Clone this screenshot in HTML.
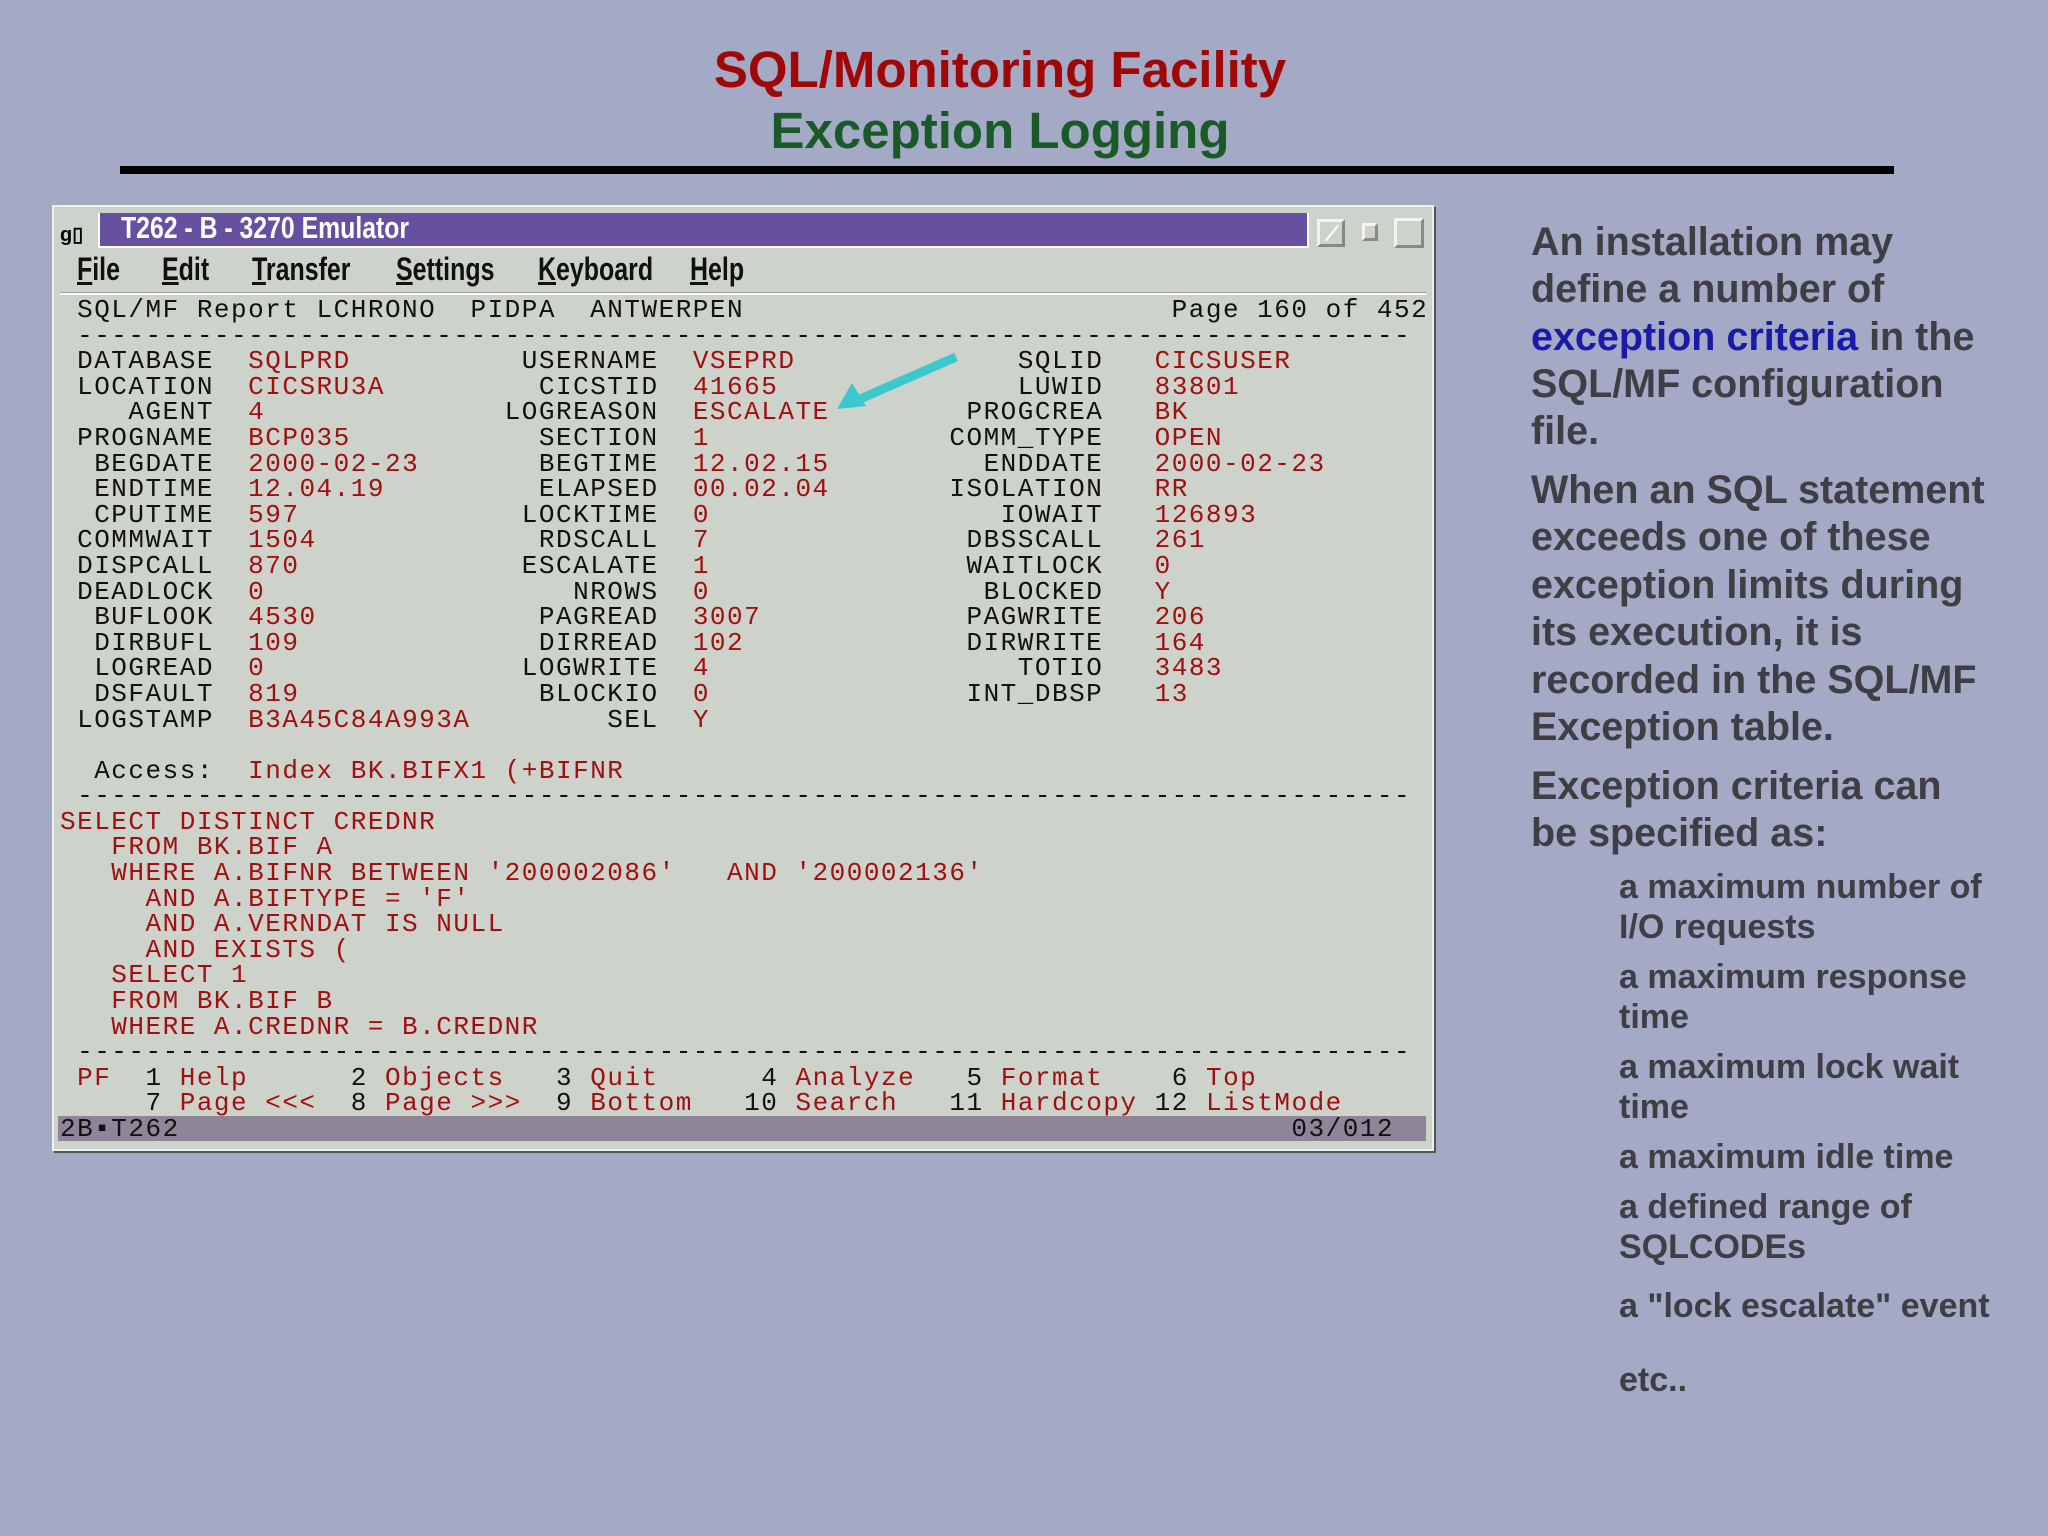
<!DOCTYPE html>
<html><head><meta charset="utf-8"><style>
*{margin:0;padding:0;box-sizing:border-box}
body{width:2048px;height:1536px;background:#a4a9c6;position:relative;overflow:hidden;font-family:"Liberation Sans",sans-serif}
.t1{position:absolute;left:0;width:2000px;text-align:center;font-weight:bold;font-size:51px}
.rule{position:absolute;left:120px;top:166px;width:1774px;height:8px;background:#000}
.win{position:absolute;left:52px;top:205px;width:1382px;height:946px;background:#cdd2cb;border:2px solid #eef0ee;box-shadow:2px 2px 0 #555}
.tb{position:absolute;left:98px;top:213px;width:1211px;height:35px;background:#6650a0;border:2px solid #fff;border-top:none}
.tbt{position:absolute;left:121px;top:210px;color:#fff;font-size:31px;font-weight:bold;transform:scaleX(.8);transform-origin:left;white-space:nowrap}
.btn{position:absolute;border:3px solid #f4f4f4;border-right-color:#888;border-bottom-color:#888}
.menu{position:absolute;top:251px;font-size:32px;font-weight:bold;transform:scaleX(.78);transform-origin:left;color:#111}
.menu u{text-decoration:underline}
.sep{position:absolute;left:60px;top:292px;width:1366px;height:3px;background:#fff;border-top:1px solid #999}
pre{position:absolute;left:60px;top:298px;font-family:"Liberation Mono",monospace;font-size:26px;letter-spacing:1.5px;line-height:25.6px;color:#111}
.r{color:#a01010}
.status{position:absolute;left:58px;top:1116px;width:1368px;height:25px;background:#8e8598}
.rt{position:absolute;left:1531px;font-weight:bold;font-size:39.5px;color:#3e3e44;white-space:nowrap;line-height:46px}
.st{position:absolute;left:1619px;font-weight:bold;font-size:34px;color:#3e3e44;white-space:nowrap;line-height:40px}
.b{color:#1a1aa8}
</style></head><body>
<div class="t1" style="top:40px;left:0;width:2000px;color:#a00808">SQL/Monitoring Facility</div>
<div class="t1" style="top:101px;color:#1a5a28">Exception Logging</div>
<div class="rule"></div>

<div class="win"></div>
<div style="position:absolute;left:60px;top:222px;font-size:20px;font-weight:bold">ɡ▯</div>
<div class="tb"></div>
<div class="tbt">T262 - B - 3270 Emulator</div>
<div class="btn" style="left:1317px;top:219px;width:28px;height:28px"></div>
<div style="position:absolute;left:1322px;top:232px;width:20px;height:2px;background:#fff;transform:rotate(-50deg)"></div>
<div class="btn" style="left:1362px;top:223px;width:16px;height:18px"></div>
<div class="btn" style="left:1394px;top:218px;width:30px;height:30px"></div>
<div class="menu" style="left:77px"><u>F</u>ile</div>
<div class="menu" style="left:162px"><u>E</u>dit</div>
<div class="menu" style="left:252px"><u>T</u>ransfer</div>
<div class="menu" style="left:396px"><u>S</u>ettings</div>
<div class="menu" style="left:538px"><u>K</u>eyboard</div>
<div class="menu" style="left:690px"><u>H</u>elp</div>
<div class="sep"></div>
<div class="status"></div>
<svg style="position:absolute;left:0;top:0" width="2048" height="1536"><line x1="956" y1="357" x2="860" y2="399" stroke="#3cc8cc" stroke-width="9"/><polygon points="837,409 852,383 866,406" fill="#3cc8cc"/></svg>
<pre> SQL/MF Report LCHRONO  PIDPA  ANTWERPEN                         Page 160 of 452
 ------------------------------------------------------------------------------
 DATABASE  <span class="r">SQLPRD</span>          USERNAME  <span class="r">VSEPRD</span>             SQLID   <span class="r">CICSUSER</span>
 LOCATION  <span class="r">CICSRU3A</span>         CICSTID  <span class="r">41665</span>              LUWID   <span class="r">83801</span>
    AGENT  <span class="r">4</span>              LOGREASON  <span class="r">ESCALATE</span>        PROGCREA   <span class="r">BK</span>
 PROGNAME  <span class="r">BCP035</span>           SECTION  <span class="r">1</span>              COMM_TYPE   <span class="r">OPEN</span>
  BEGDATE  <span class="r">2000-02-23</span>       BEGTIME  <span class="r">12.02.15</span>         ENDDATE   <span class="r">2000-02-23</span>
  ENDTIME  <span class="r">12.04.19</span>         ELAPSED  <span class="r">00.02.04</span>       ISOLATION   <span class="r">RR</span>
  CPUTIME  <span class="r">597</span>             LOCKTIME  <span class="r">0</span>                 IOWAIT   <span class="r">126893</span>
 COMMWAIT  <span class="r">1504</span>             RDSCALL  <span class="r">7</span>               DBSSCALL   <span class="r">261</span>
 DISPCALL  <span class="r">870</span>             ESCALATE  <span class="r">1</span>               WAITLOCK   <span class="r">0</span>
 DEADLOCK  <span class="r">0</span>                  NROWS  <span class="r">0</span>                BLOCKED   <span class="r">Y</span>
  BUFLOOK  <span class="r">4530</span>             PAGREAD  <span class="r">3007</span>            PAGWRITE   <span class="r">206</span>
  DIRBUFL  <span class="r">109</span>              DIRREAD  <span class="r">102</span>             DIRWRITE   <span class="r">164</span>
  LOGREAD  <span class="r">0</span>               LOGWRITE  <span class="r">4</span>                  TOTIO   <span class="r">3483</span>
  DSFAULT  <span class="r">819</span>              BLOCKIO  <span class="r">0</span>               INT_DBSP   <span class="r">13</span>
 LOGSTAMP  <span class="r">B3A45C84A993A</span>        SEL  <span class="r">Y</span>

  Access:  <span class="r">Index BK.BIFX1 (+BIFNR</span>
 ------------------------------------------------------------------------------
<span class="r">SELECT DISTINCT CREDNR
   FROM BK.BIF A
   WHERE A.BIFNR BETWEEN '200002086'   AND '200002136'
     AND A.BIFTYPE = 'F'
     AND A.VERNDAT IS NULL
     AND EXISTS (
   SELECT 1
   FROM BK.BIF B
   WHERE A.CREDNR = B.CREDNR</span>
 ------------------------------------------------------------------------------
 <span class="r">PF</span>  1 <span class="r">Help</span>      2 <span class="r">Objects</span>   3 <span class="r">Quit</span>      4 <span class="r">Analyze</span>   5 <span class="r">Format</span>    6 <span class="r">Top</span>
     7 <span class="r">Page &lt;&lt;&lt;</span>  8 <span class="r">Page &gt;&gt;&gt;</span>  9 <span class="r">Bottom</span>   10 <span class="r">Search</span>   11 <span class="r">Hardcopy</span> 12 <span class="r">ListMode</span>
2B▪T262                                                                 03/012</pre>

<div class="rt" style="top:219px">An installation may</div>
<div class="rt" style="top:266px">define a number of</div>
<div class="rt" style="top:314px"><span class="b">exception criteria</span> in the</div>
<div class="rt" style="top:361px">SQL/MF configuration</div>
<div class="rt" style="top:408px">file.</div>
<div class="rt" style="top:467px">When an SQL statement</div>
<div class="rt" style="top:514px">exceeds one of these</div>
<div class="rt" style="top:562px">exception limits during</div>
<div class="rt" style="top:609px">its execution, it is</div>
<div class="rt" style="top:657px">recorded in the SQL/MF</div>
<div class="rt" style="top:704px">Exception table.</div>
<div class="rt" style="top:763px">Exception criteria can</div>
<div class="rt" style="top:810px">be specified as:</div>
<div class="st" style="top:867px">a maximum number of</div>
<div class="st" style="top:907px">I/O requests</div>
<div class="st" style="top:957px">a maximum response</div>
<div class="st" style="top:997px">time</div>
<div class="st" style="top:1047px">a maximum lock wait</div>
<div class="st" style="top:1087px">time</div>
<div class="st" style="top:1137px">a maximum idle time</div>
<div class="st" style="top:1187px">a defined range of</div>
<div class="st" style="top:1227px">SQLCODEs</div>
<div class="st" style="top:1286px">a "lock escalate" event</div>
<div class="st" style="top:1360px">etc..</div>
</body></html>
